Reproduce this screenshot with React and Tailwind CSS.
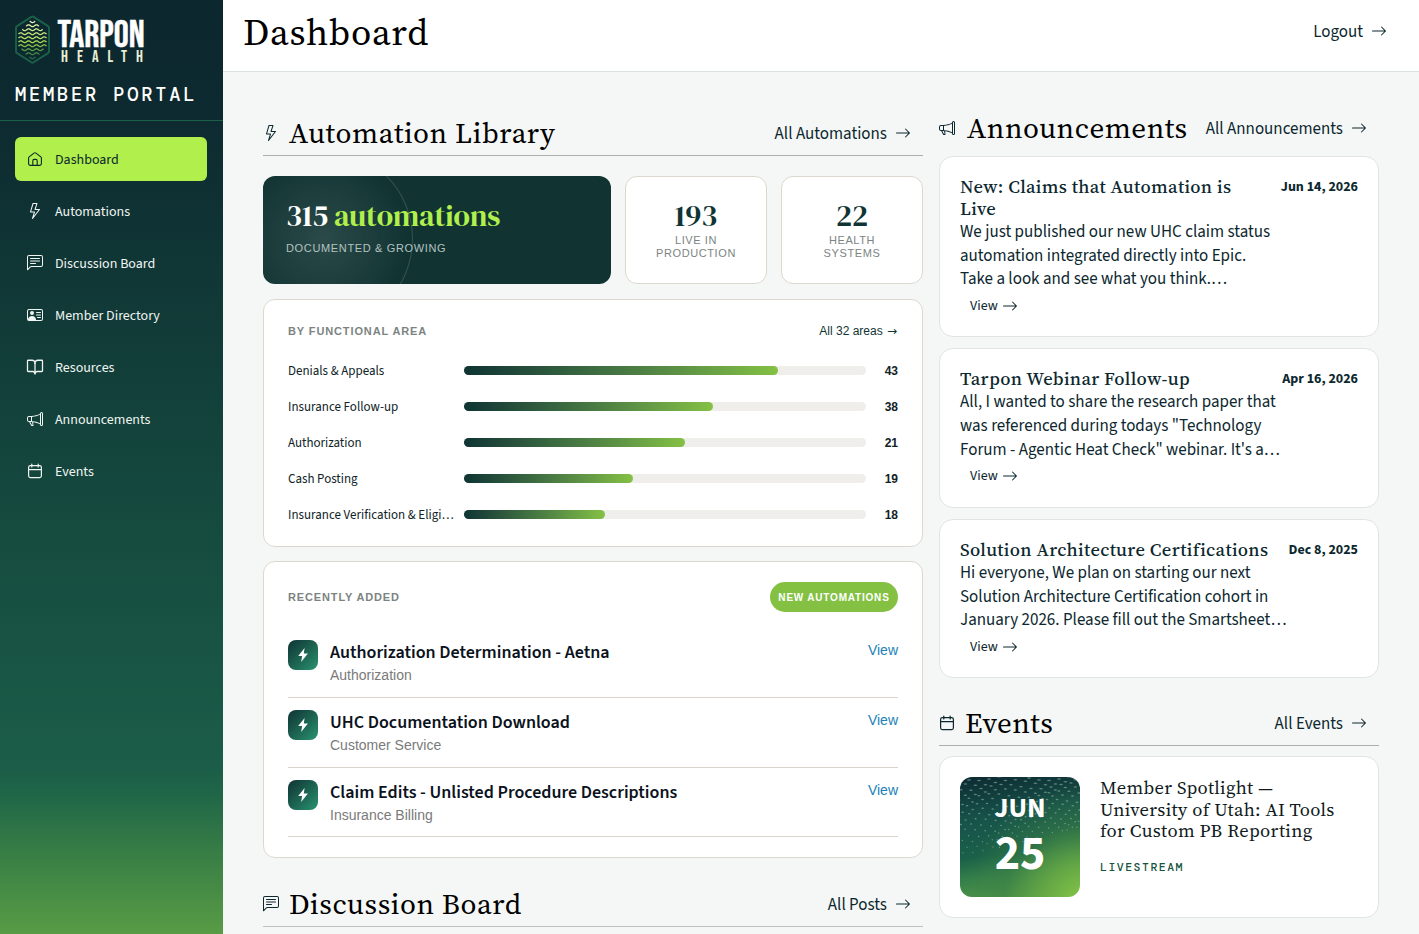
import React from "react";
import {
  BsArrowRight,
  BsChatLeftText,
  BsLightning,
  BsMegaphone,
  BsPersonVcard,
} from "react-icons/bs";
import { BookOpen } from "lucide-react";

const HomeIcon = () => (
  <svg width="16" height="16" viewBox="0 0 16 16" fill="none" stroke="currentColor" strokeWidth="1.1" strokeLinejoin="round">
    <path d="M1.6 7.1a1.6 1.6 0 0 1 .6-1.25L7 2.1a1.6 1.6 0 0 1 2 0l4.8 3.75a1.6 1.6 0 0 1 .6 1.25v5.5a1.8 1.8 0 0 1-1.8 1.8H3.4a1.8 1.8 0 0 1-1.8-1.8z" />
    <path d="M5.8 14.4V9.9c0-.9.6-1.5 1.4-1.5h1.6c.8 0 1.4.6 1.4 1.5v4.5" />
  </svg>
);

const CalendarIcon = () => (
  <svg width="16" height="16" viewBox="0 0 16 16" fill="none" stroke="currentColor" strokeWidth="1.2" strokeLinecap="round">
    <rect x="1.6" y="2.6" width="12.8" height="12" rx="1.8" />
    <path d="M1.6 6.6h12.8M4.8 1v3M11.2 1v3" />
  </svg>
);

// half-widths of the wave rows inside the logo hexagon
const waveRows = [2.8, 6.5, 10.3, 14, 14, 14, 14, 11, 7, 3];

const wavePath = (half, y) => {
  let d = "";
  for (let x = -half; x <= half + 0.01; x += 0.5) {
    const wy = y + 0.9 * Math.cos((x * 2 * Math.PI) / 7.8);
    d += `${d ? "L" : "M"}${(17.5 + x).toFixed(2)} ${wy.toFixed(2)}`;
  }
  return d;
};

const Logo = () => (
  <svg width="150" height="50" viewBox="0 0 150 50" className="block overflow-visible">
    <defs>
      <linearGradient id="waves" x1="0" y1="5" x2="0" y2="45" gradientUnits="userSpaceOnUse">
        <stop offset="0" stopColor="#f4f7c9" />
        <stop offset="0.55" stopColor="#b0e04c" />
        <stop offset="0.75" stopColor="#5c9f43" />
        <stop offset="1" stopColor="#1b6149" />
      </linearGradient>
    </defs>
    <path
      d="M16.4 1.9a2 2 0 0 1 2.2 0l14.4 9.2a2 2 0 0 1 1 1.7v23.6a2 2 0 0 1-1 1.7l-14.4 9.2a2 2 0 0 1-2.2 0L2 38.1a2 2 0 0 1-1-1.7V12.8a2 2 0 0 1 1-1.7z"
      fill="none"
      stroke="#1b6149"
      strokeWidth="1.9"
    />
    <g fill="none" stroke="url(#waves)" strokeWidth="1.3">
      {waveRows.map((half, i) => (
        <path key={i} d={wavePath(half, 6.7 + i * 4)} />
      ))}
    </g>
    <text
      x="42.5"
      y="31.6"
      fontSize="37.3"
      fill="#fff"
      stroke="#fff"
      strokeWidth="0.5"
      className="font-['Bebas_Neue','Roboto',sans-serif]"
    >
      TARPON
    </text>
    <text
      x="46"
      y="46.7"
      fontSize="16.5"
      fill="#e9efd3"
      letterSpacing="9"
      className="font-['Bebas_Neue','Roboto',sans-serif]"
    >
      HEALTH
    </text>
  </svg>
);

const navItems = [
  { name: "Dashboard", icon: <HomeIcon />, active: true },
  { name: "Automations", icon: <BsLightning size={16} /> },
  { name: "Discussion Board", icon: <BsChatLeftText size={16} /> },
  { name: "Member Directory", icon: <BsPersonVcard size={16} /> },
  { name: "Resources", icon: <BookOpen size={18} strokeWidth={1.7} className="-ml-px" /> },
  { name: "Announcements", icon: <BsMegaphone size={16} /> },
  { name: "Events", icon: <CalendarIcon /> },
];

const areas = [
  { name: "Denials & Appeals", count: 43, width: 78 },
  { name: "Insurance Follow-up", count: 38, width: 62 },
  { name: "Authorization", count: 21, width: 55 },
  { name: "Cash Posting", count: 19, width: 42 },
  { name: "Insurance Verification & Eligi…", count: 18, width: 35 },
];

const recent = [
  { title: "Authorization Determination - Aetna", area: "Authorization" },
  { title: "UHC Documentation Download", area: "Customer Service" },
  { title: "Claim Edits - Unlisted Procedure Descriptions", area: "Insurance Billing" },
];

const announcements = [
  {
    title: ["New: Claims that Automation is", "Live"],
    height: "h-[181px]",
    date: "Jun 14, 2026",
    lines: [
      "We just published our new UHC claim status",
      "automation integrated directly into Epic.",
      "Take a look and see what you think.…",
    ],
  },
  {
    title: ["Tarpon Webinar Follow-up"],
    height: "h-[159.6px]",
    date: "Apr 16, 2026",
    lines: [
      "All, I wanted to share the research paper that",
      'was referenced during todays "Technology',
      'Forum - Agentic Heat Check" webinar. It\'s a…',
    ],
  },
  {
    title: ["Solution Architecture Certifications"],
    height: "h-[159.6px]",
    date: "Dec 8, 2025",
    lines: [
      "Hi everyone, We plan on starting our next",
      "Solution Architecture Certification cohort in",
      "January 2026. Please fill out the Smartsheet…",
    ],
  },
];

const SectionLink = ({ children }) => (
  <a className="mt-[2px] flex items-center gap-2 text-[17px] leading-6 whitespace-nowrap text-[#0c272e]">
    {children}
    <BsArrowRight size={16} className="mb-[2px]" />
  </a>
);

const SectionHeader = ({ icon, title, link, className }) => (
  <div className={`flex items-center justify-between pr-3 ${className}`}>
    <div className="flex items-center text-[#0c272e]">
      {icon}
      <h2 className="ml-[10px] font-['Source_Serif_4','Liberation_Serif',serif] text-[29px] leading-9 tracking-[0.53px] whitespace-nowrap text-black [font-optical-sizing:none]">
        {title}
      </h2>
    </div>
    <SectionLink>{link}</SectionLink>
  </div>
);

const StatCard = ({ value, label }) => (
  <div className="flex h-[108px] w-[142px] flex-col items-center rounded-xl border border-[#ddd8cd] bg-white pt-[25px] text-center">
    <div className="font-['DM_Serif_Display','Liberation_Serif',serif] text-[30px] leading-7 text-[#0f3433]">{value}</div>
    <div className="mt-1 font-['Liberation_Sans',sans-serif] text-[11px] leading-[13px] tracking-[0.6px] text-[#7c8482]">
      {label[0]}
      <br />
      {label[1]}
    </div>
  </div>
);

// wavy rows of dashes shrinking toward the bottom of the date tile
const dashes = [];
for (let row = 0; row < 17; row++) {
  for (let col = 0; col < 13; col++) {
    const x = col * 10 + (row % 2) * 5 - 1;
    const y = 1 + row * 4.9 + Math.sin(col * 0.9 + row * 0.45) * 2.6 - col * 0.1 * row;
    if (y < 80 - x * 0.24) {
      dashes.push({ x: x + Math.sin(row * 0.8) * 2, y, r: Math.max(0.6, 2 - row * 0.1) });
    }
  }
}

const Sidebar = () => (
  <aside className="h-full w-[223px] shrink-0 bg-[linear-gradient(180deg,#0c272e_0%,#0d2a30_12%,#14463d_50%,#1b5d48_82%,#1f6648_85%,#3a8045_92%,#589c45_100%)]">
    <div className="h-[121px] border-b border-[#1b6149] pt-[15px] pl-[15px]">
      <Logo />
      <div className="mt-[18px] font-['DM_Mono','Roboto_Mono','DejaVu_Sans_Mono',monospace] text-[18.8px] leading-6 font-medium tracking-[2.75px] whitespace-nowrap text-white">
        MEMBER PORTAL
      </div>
    </div>
    <nav className="flex flex-col gap-2 px-[15px] pt-4">
      {navItems.map((item) => (
        <a
          key={item.name}
          className={`flex h-11 w-48 items-center rounded-md pl-3 text-[14px] ${
            item.active ? "bg-[#b0ef4c] text-[#0c272e]" : "text-[#f0f5f2]"
          }`}
        >
          <span className="flex w-7 items-center">{item.icon}</span>
          <span className="mt-[2px]">{item.name}</span>
        </a>
      ))}
    </nav>
  </aside>
);

const FunctionalAreas = () => (
  <div className="mt-[15px] h-[248px] rounded-xl border border-[#ddd8cd] bg-white px-6 pt-[21px]">
    <div className="flex h-5 items-center justify-between font-['Liberation_Sans',sans-serif]">
      <h3 className="text-[11px] font-bold tracking-[0.88px] text-[#7c8482]">BY FUNCTIONAL AREA</h3>
      <a className="text-[12px] text-[#0f3433]">
        All 32 areas <span className="inline-block w-3 text-center font-['DejaVu_Sans',sans-serif]">→</span>
      </a>
    </div>
    <div className="mt-3">
      {areas.map((area) => (
        <div key={area.name} className="flex h-[35.9px] items-center">
          <span className="w-44 shrink-0 pt-[2px] text-[13px] whitespace-nowrap text-[#0f2327]">{area.name}</span>
          <div className="h-[9px] w-[402px] rounded-full bg-[#efeeea]">
            <div
              className="h-full rounded-full bg-linear-to-r from-[#0f3433] to-[#84c143]"
              style={{ width: `${area.width}%` }}
            />
          </div>
          <span className="ml-auto font-['Liberation_Sans',sans-serif] text-[12px] font-bold text-[#0f2327]">
            {area.count}
          </span>
        </div>
      ))}
    </div>
  </div>
);

const RecentlyAdded = () => (
  <div className="mt-[14px] h-[297px] rounded-xl border border-[#ddd8cd] bg-white px-6 pt-5">
    <div className="flex items-center justify-between font-['Liberation_Sans',sans-serif] font-bold">
      <h3 className="text-[11px] tracking-[0.86px] text-[#7c8482]">RECENTLY ADDED</h3>
      <span className="flex h-[30px] w-32 items-center justify-center rounded-full bg-[#84c143] text-[10px] tracking-[0.8px] whitespace-nowrap text-white">
        NEW AUTOMATIONS
      </span>
    </div>
    <div className="mt-4">
      {recent.map((item) => (
        <div key={item.title} className="flex h-[69.8px] border-b border-[#d9d4cc] pt-3">
          <div className="flex size-[30px] items-center justify-center rounded-lg bg-linear-to-br from-[#0f3433] to-[#2a9470]">
            <svg width="12" height="16" viewBox="0 0 12 16" fill="#fff">
              <path d="M7.6 1 1.2 9.1h3.9L4.2 15l6.7-8.4H6.8z" />
            </svg>
          </div>
          <div className="ml-3">
            <div className="text-[18px] leading-[25px] font-semibold whitespace-nowrap text-[#0b1220]">
              {item.title}
            </div>
            <div className="-mt-px font-['Liberation_Sans',sans-serif] text-[14px] leading-[23px] text-[#7a7a7a]">
              {item.area}
            </div>
          </div>
          <a className="ml-auto font-['Liberation_Sans',sans-serif] text-[14px] leading-5 text-[#1c82b8]">View</a>
        </div>
      ))}
    </div>
  </div>
);

const AnnouncementCard = ({ item }) => (
  <div className={`rounded-[14px] border border-[#e0e4e3] bg-white px-5 pt-[19px] text-[#0c272e] ${item.height}`}>
    <div className="flex justify-between">
      <h3 className="font-['Source_Serif_4','Liberation_Serif',serif] text-[18.5px] leading-[21.6px] font-medium tracking-[0.33px] whitespace-nowrap [font-optical-sizing:none]">
        {item.title.map((t) => (
          <div key={t}>{t}</div>
        ))}
      </h3>
      <span className="h-0 text-[14px] leading-[22px] font-bold whitespace-nowrap">{item.date}</span>
    </div>
    <div className="pt-[1.7px] text-[17px] leading-[23.8px] whitespace-nowrap">
      {item.lines.map((line) => (
        <div key={line}>{line}</div>
      ))}
    </div>
    <a className="flex h-[27.5px] items-center gap-1 pl-[10px] text-[14px]">
      View <BsArrowRight size={16} className="mb-px" />
    </a>
  </div>
);

const EventCard = () => (
  <div className="mt-[10px] flex h-[162px] rounded-[14px] border border-[#e0e4e3] bg-white p-5">
    <div className="relative flex size-[120px] flex-col items-center overflow-hidden rounded-xl bg-[radial-gradient(circle_at_105%_108%,#8acb45_0%,rgba(106,172,69,0.85)_24%,rgba(60,128,70,0.5)_46%,transparent_68%),linear-gradient(172deg,#0c2a31_0%,#17524a_32%,#1a6049_60%,#35804a_76%,#579d45_100%)] font-bold text-white">
      <svg width="120" height="120" viewBox="0 0 120 120" className="absolute inset-0">
        {dashes.map((d, i) => (
          <ellipse key={i} cx={d.x} cy={d.y} rx={d.r} ry="0.75" fill="#a9c9b5" opacity="0.5" />
        ))}
      </svg>
      <div className="relative mt-[15px] text-[28px] leading-8">JUN</div>
      <div className="relative mt-[4px] text-[48px] leading-[52px]">25</div>
    </div>
    <div className="ml-5">
      <h3 className="font-['Source_Serif_4','Liberation_Serif',serif] text-[18.5px] leading-[21.6px] tracking-[0.32px] whitespace-nowrap text-[#101a1c] [font-optical-sizing:none]">
        Member Spotlight —<br />
        University of Utah: AI Tools
        <br />
        for Custom PB Reporting
      </h3>
      <div className="mt-4 font-['DM_Mono','Roboto_Mono','DejaVu_Sans_Mono',monospace] text-[11.5px] leading-5 font-medium tracking-[1.5px] text-[#17553f]">
        LIVESTREAM
      </div>
    </div>
  </div>
);

const App = () => {
  return (
    <div className="flex h-[934px] w-[1419px] overflow-hidden bg-[#f5f7f6] font-['Source_Sans_3','Source_Sans_Pro','Noto_Sans_CJK_SC',sans-serif]">
      <Sidebar />
      <div className="flex min-w-0 flex-1 flex-col">
        <header className="flex h-[72px] shrink-0 justify-between border-b border-[#dbe2df] bg-white pr-8 pl-5">
          <h1 className="mt-2 font-['Source_Serif_4','Liberation_Serif',serif] text-[37px] leading-[48px] tracking-[0.7px] text-black [font-optical-sizing:none]">
            Dashboard
          </h1>
          <div className="mt-[18px]">
            <SectionLink>Logout</SectionLink>
          </div>
        </header>
        <main className="flex gap-4 px-10">
          <section className="w-[660px]">
            <SectionHeader
              icon={<BsLightning size={16} />}
              title="Automation Library"
              link="All Automations"
              className="mt-[39px] h-[45px] border-b border-[#a9b0ae]"
            />
            <div className="mt-5 flex gap-[14px]">
              <div className="relative h-[108px] w-[348px] overflow-hidden rounded-xl bg-[#113433] pt-[25px] pl-6">
                <div className="absolute -top-[27px] -left-[30px] size-[180px] rounded-full border border-white/15 bg-[radial-gradient(circle,rgba(255,255,255,0.11)_0%,transparent_70%)]" />
                <div className="relative -ml-px font-['DM_Serif_Display','Liberation_Serif',serif] text-[30px] leading-[30px] tracking-[-0.05px] whitespace-nowrap text-white [word-spacing:-0.9px]">
                  315 <span className="text-[#b0ef4c]">automations</span>
                </div>
                <div className="relative mt-[10px] -ml-px font-['Liberation_Sans',sans-serif] text-[11px] leading-[14px] tracking-[0.65px] text-[#b4c2c0]">
                  DOCUMENTED &amp; GROWING
                </div>
              </div>
              <StatCard value="193" label={["LIVE IN", "PRODUCTION"]} />
              <StatCard value="22" label={["HEALTH", "SYSTEMS"]} />
            </div>
            <FunctionalAreas />
            <RecentlyAdded />
            <SectionHeader
              icon={<BsChatLeftText size={16} />}
              title="Discussion Board"
              link="All Posts"
              className="mt-[23.6px] h-[45px] border-b border-[#bcc2c0]"
            />
          </section>
          <section className="w-[440px]">
            <SectionHeader
              icon={<BsMegaphone size={16} className="mr-[2px]" />}
              title="Announcements"
              link="All Announcements"
              className="mt-[34px] h-[44px]"
            />
            <div className="mt-[6px] flex flex-col gap-[11px]">
              {announcements.map((item) => (
                <AnnouncementCard key={item.date} item={item} />
              ))}
            </div>
            <SectionHeader
              icon={<CalendarIcon />}
              title="Events"
              link="All Events"
              className="mt-[22.8px] h-[45px] border-b border-[#a9b0ae]"
            />
            <EventCard />
          </section>
        </main>
      </div>
    </div>
  );
};

export default App;
